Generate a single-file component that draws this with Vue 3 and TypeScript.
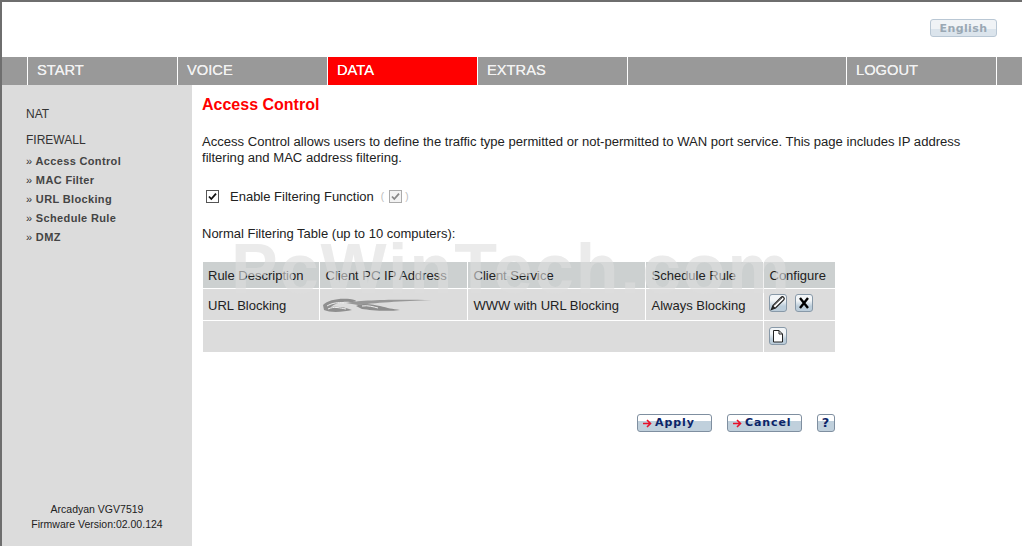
<script setup lang="ts">
const tabs = [
  { label: 'START', w: 149 },
  { label: 'VOICE', w: 149 },
  { label: 'DATA', w: 149, active: true },
  { label: 'EXTRAS', w: 149 },
  { label: '', w: 218 },
  { label: 'LOGOUT', w: 149 },
]
const subs = ['Access Control', 'MAC Filter', 'URL Blocking', 'Schedule Rule', 'DMZ']
</script>

<template>
  <div class="frame">
    <header class="top">
      <span class="lang">English</span>
    </header>
    <nav class="nav">
      <div class="spacer"></div>
      <a v-for="t in tabs" :key="t.label" class="tab" :class="{ active: t.active }" :style="{ width: t.w + 'px' }">{{ t.label }}</a>
    </nav>
    <div class="body">
      <aside class="side">
        <div class="menu">
          <div class="group first">NAT</div>
          <div class="group">FIREWALL</div>
          <ul class="subs">
            <li v-for="s in subs" :key="s"><span class="raquo">»</span> {{ s }}</li>
          </ul>
        </div>
        <div class="foot">
          <div>Arcadyan VGV7519</div>
          <div>Firmware Version:02.00.124</div>
        </div>
      </aside>
      <main class="main">
        <h1>Access Control</h1>
        <p class="intro">Access Control allows users to define the traffic type permitted or not-permitted to WAN port service. This page includes IP address filtering and MAC address filtering.</p>
        <div class="enable">
          <span class="cb">
            <svg viewBox="0 0 13 13" width="13" height="13"><path d="M3 6.5 5.3 9 10 3.6" fill="none" stroke="#111" stroke-width="1.8" /></svg>
          </span>
          <span class="en-label">Enable Filtering Function</span>
          <span class="paren">(</span>
          <span class="cb dim">
            <svg viewBox="0 0 13 13" width="13" height="13"><path d="M3 6.5 5.3 9 10 3.6" fill="none" stroke="#888" stroke-width="1.8" /></svg>
          </span>
          <span class="paren">)</span>
        </div>
        <p class="cap">Normal Filtering Table (up to 10 computers):</p>
        <div class="table-wrap">
          <table class="tbl">
            <colgroup>
              <col style="width:116px" /><col style="width:148px" /><col style="width:178px" /><col style="width:118px" /><col style="width:72px" />
            </colgroup>
            <tbody>
              <tr class="head">
                <td>Rule Description</td><td>Client PC IP Address</td><td>Client Service</td><td>Schedule Rule</td><td>Configure</td>
              </tr>
              <tr class="row">
                <td class="txt">URL Blocking</td>
                <td class="smudge-cell">
                  <svg class="smudge" width="112" height="16" viewBox="0 0 112 16">
                    <g class="blur">
                      <path d="M1 8C6 3 16 1 28 2 36 3 36 5 28 5 20 4 12 7 9 10 14 9 24 10 30 13 22 15 8 16 2 13Z" fill="#8f8f8f" />
                      <path d="M5 9C10 6 16 5 22 6M6 12C12 9 18 11 24 12" fill="none" stroke="#efefef" stroke-width="1" />
                      <path d="M24 6C36 3 70 2 110 3 80 4 50 6 36 8Z" fill="#979797" />
                      <path d="M34 9C42 5 52 8 58 9 66 11 70 12 78 13 64 15 48 13 40 12Z" fill="#8d8d8d" />
                      <path d="M40 9C46 8 52 10 56 11" fill="none" stroke="#efefef" stroke-width="1" />
                    </g>
                  </svg>
                </td>
                <td class="txt">WWW with URL Blocking</td>
                <td class="txt">Always Blocking</td>
                <td class="icons">
                  <span class="ib">
                    <svg viewBox="0 0 16 16" width="16" height="16"><path d="M1.5 14.5 3 10.5 11 2.4c.9-.8 2-.7 2.7 0s.7 1.7 0 2.5L5.5 13Z" fill="#fff" stroke="#222" stroke-width="1.3" /><path d="M4.5 10 12 3" stroke="#666" /><path d="M1.5 14.5 3 10.5 5.5 13Z" fill="#222" /></svg>
                  </span>
                  <span class="ib">
                    <svg viewBox="0 0 16 16" width="16" height="16"><path d="M4 3 12 13M12 3 4 13" stroke="#000" stroke-width="2.4" /></svg>
                  </span>
                </td>
              </tr>
              <tr class="row last">
                <td colspan="4"></td>
                <td class="icons">
                  <span class="ib">
                    <svg viewBox="0 0 16 16" width="16" height="16"><path d="M3.5 2.5H9L12.5 6V14H3.5Z" fill="#fff" stroke="#222" /><path d="M9 2.5V6H12.5" fill="none" stroke="#222" /></svg>
                  </span>
                </td>
              </tr>
            </tbody>
          </table>
          <div class="mark">PcWinTech.com</div>
        </div>
        <div class="actions">
          <span class="btn wide apply">
            <svg class="arrow" viewBox="0 0 9 9" width="9" height="9"><path d="M0 4.5H7M4 1 7.5 4.5 4 8" fill="none" stroke="#e8102a" stroke-width="1.6" /></svg>Apply</span>
          <span class="btn wide cancel">
            <svg class="arrow" viewBox="0 0 9 9" width="9" height="9"><path d="M0 4.5H7M4 1 7.5 4.5 4 8" fill="none" stroke="#e8102a" stroke-width="1.6" /></svg>Cancel</span>
          <span class="btn help">?</span>
        </div>
      </main>
    </div>
  </div>
</template>

<style>
html, body { margin: 0; background: #fff; overflow: hidden; }
</style>

<style scoped>
.frame {
  width: 1022px;
  height: 546px;
  box-sizing: border-box;
  border-top: 2px solid #6e6e6e;
  border-left: 2px solid #6e6e6e;
  display: flex;
  flex-direction: column;
  font-family: "Liberation Sans", Arial, sans-serif;
  color: #222;
  overflow: hidden;
}
.top {
  height: 55px;
  flex: none;
  display: flex;
  justify-content: flex-end;
  align-items: flex-start;
  padding: 17px 25px 0 0;
  box-sizing: border-box;
}
.lang {
  width: 67px;
  height: 18px;
  box-sizing: border-box;
  border: 1px solid #b9c7d4;
  border-radius: 3px;
  background: linear-gradient(#f0f3f6 0 55%, #dbe4ec 55%);
  color: #9aa8b4;
  font-size: 11px;
  font-weight: bold;
  letter-spacing: 0.4px;
  text-align: center;
  line-height: 17px;
  font-family: "DejaVu Sans", sans-serif;
}
.nav {
  height: 28px;
  flex: none;
  background: #999;
  display: flex;
}
.spacer { width: 25px; flex: none; }
.tab {
  flex: none;
  border-left: 1px solid #fff;
  color: #f2f2f2;
  font-size: 14.7px;
  line-height: 27px;
  text-indent: 9px;
  text-shadow: 0 0 0.4px #f2f2f2;
}
.tab.active { background: #f00; color: #fff; }
.tab:last-child { border-right: 1px solid #fff; }
.body { flex: 1; display: flex; min-height: 0; }
.side {
  width: 190px;
  flex: none;
  background: #dcdcdc;
  display: flex;
  flex-direction: column;
  justify-content: space-between;
}
.menu { padding: 21px 0 0 24px; }
.group { font-size: 12px; line-height: 16px; color: #333; margin-bottom: 10px; }
.subs { list-style: none; margin: -6px 0 0; padding: 0; }
.subs li { font-size: 11px; font-weight: bold; letter-spacing: 0.35px; line-height: 19px; color: #444; }
.raquo { font-weight: normal; color: #333; }
.foot {
  font-size: 10.5px;
  line-height: 15px;
  color: #222;
  text-align: center;
  padding-bottom: 14px;
}
.main { flex: 1; padding: 0 0 0 10px; min-width: 0; }
h1 {
  margin: 11px 0 0;
  font-size: 16px;
  line-height: 18px;
  color: #f00;
  font-weight: bold;
}
.intro {
  margin: 20px 40px 0 0;
  font-size: 13.08px;
  line-height: 16px;
  color: #222;
}
.enable {
  display: flex;
  align-items: center;
  margin: 22px 0 0 4px;
  height: 16px;
  font-size: 13px;
}
.cb {
  width: 13px;
  height: 13px;
  box-sizing: border-box;
  border: 1px solid #555;
  background: #fff;
  display: flex;
  align-items: center;
  justify-content: center;
}
.cb svg { flex: none; }
.cb.dim { border-color: #aaa; background: #f3f3f3; margin: 0 3px 0 5px; }
.en-label { margin: 0 7px 0 11px; }
.paren { color: #bbb; font-size: 10px; }
.cap { margin: 22px 0 0; font-size: 13px; line-height: 16px; }
.table-wrap { position: relative; width: 632px; margin: 20px 0 0 1px; }
.tbl {
  width: 632px;
  table-layout: fixed;
  border-collapse: collapse;
  font-size: 13px;
  color: #222;
}
.tbl td { padding: 0 0 0 6px; border: 1px solid #fff; border-width: 0 1px 1px 0; }
.tbl td:first-child { padding-left: 5px; }
.tbl td:last-child { border-right: 0; }
.head td { background: #ccd0d0; height: 26px; }
.row td { background: #dcdcdc; height: 31px; }
.row td.txt { padding-top: 2px; height: 29px; }
.row.last td { border-bottom: 0; height: 31px; }
.tbl .smudge-cell { padding-left: 2px; }
.smudge { display: block; }
.blur { filter: blur(0.6px); }
.tbl .icons { white-space: nowrap; font-size: 0; vertical-align: top; padding-top: 5px; padding-left: 5px; height: 26px; }
.tbl .last .icons { padding-top: 6px; height: 25px; }
.ib {
  display: inline-flex;
  align-items: center;
  justify-content: center;
  width: 18px;
  height: 18px;
  box-sizing: border-box;
  border: 1px solid #8899a8;
  border-radius: 3px;
  background: linear-gradient(#f2f5f7 0, #f2f5f7 35%, #bccdda 70%, #bccdda 100%);
  margin-right: 8px;
  vertical-align: top;
}
.mark {
  position: absolute;
  left: 28px;
  top: -29px;
  font-size: 70px;
  line-height: 72px;
  letter-spacing: 2px;
  font-weight: bold;
  color: #dedede;
  opacity: 0.6;
  white-space: nowrap;
  pointer-events: none;
}
.actions {
  display: flex;
  align-items: center;
  margin: 62px 0 0 435px;
}
.btn {
  height: 18px;
  box-sizing: border-box;
  border: 1px solid #7f8fa0;
  border-radius: 3px;
  background: linear-gradient(#fff 0 40%, #c0d0dc 40%);
  color: #0b2468;
  font-family: "DejaVu Sans", sans-serif;
  font-weight: bold;
  font-size: 11px;
  letter-spacing: 0.9px;
  line-height: 18px;
  display: flex;
  align-items: center;
}
.wide { width: 75px; padding-left: 5px; }
.cancel { margin-left: 15px; }
.help { width: 18px; justify-content: center; margin-left: 15px; font-size: 13px; }
.arrow { flex: none; margin-right: 3px; }
</style>
